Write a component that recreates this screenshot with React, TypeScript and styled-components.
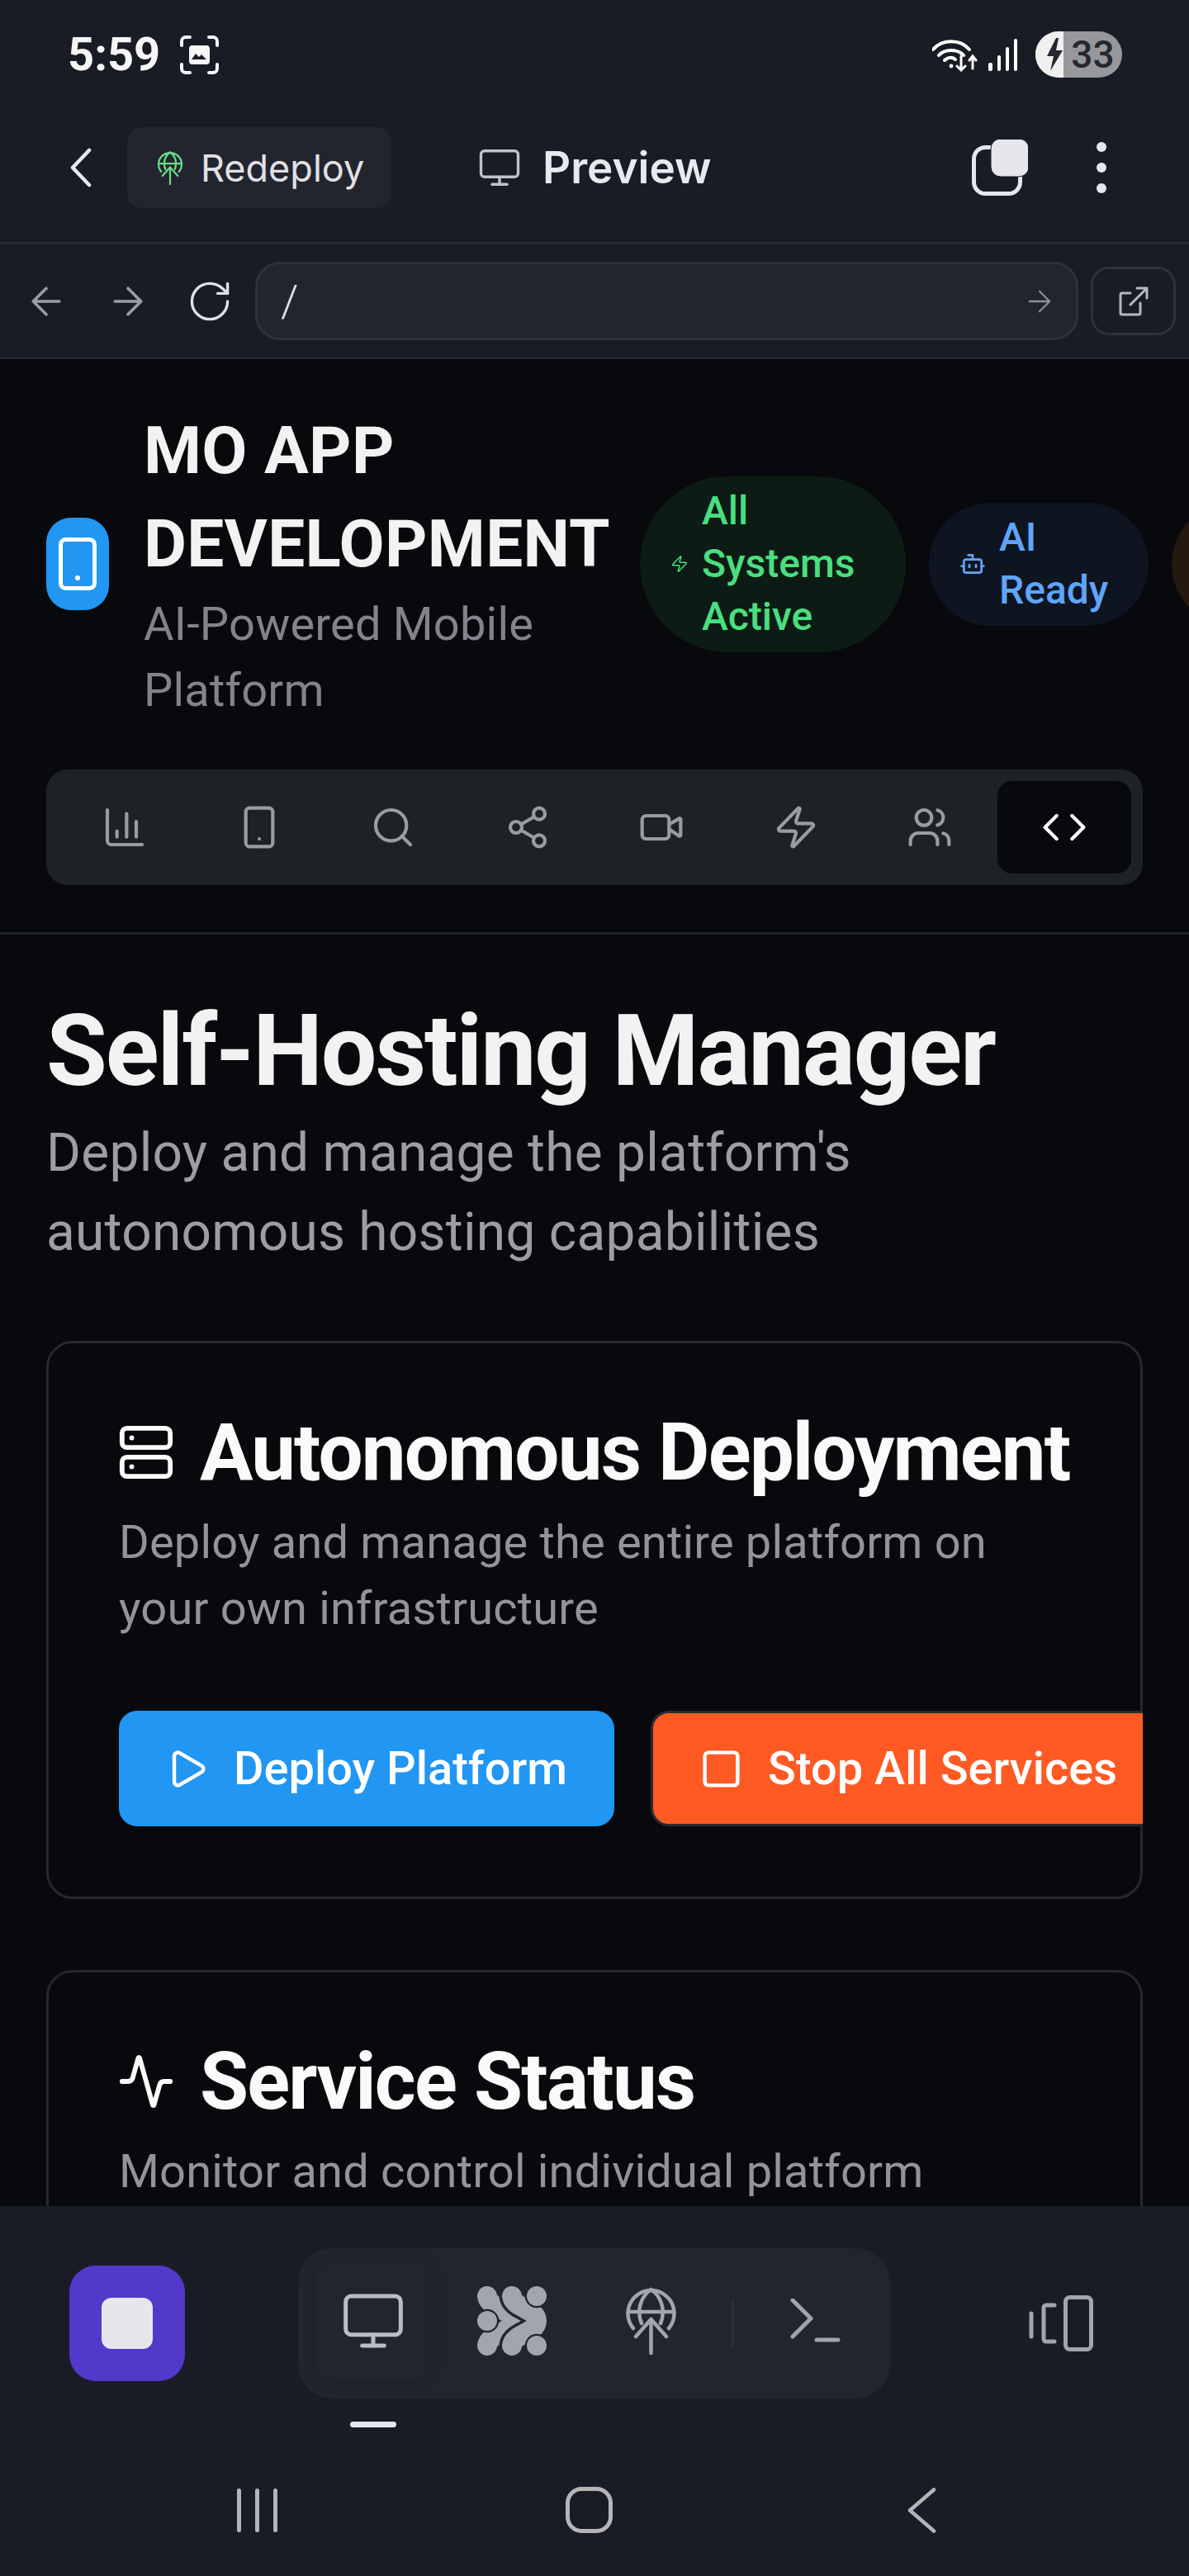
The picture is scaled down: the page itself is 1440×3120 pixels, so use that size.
import styled, { createGlobalStyle } from 'styled-components';
import { Bot, ChartColumn, Code, Monitor, Play, Search, Server, Share2, Smartphone, Square, Users, Video, Zap, Activity } from 'lucide-react';

const GlobalStyle = createGlobalStyle`
  html, body {
    margin: 0;
    padding: 0;
    background: #08090c;
  }
  * {
    box-sizing: border-box;
  }
`;

const Screen = styled.div`
  width: 1440px;
  height: 3120px;
  display: flex;
  flex-direction: column;
  overflow: hidden;
  background: #08090c;
  font-family: Roboto, 'Liberation Sans', sans-serif;
`;

const Chrome = styled.header`
  flex: none;
  background: #191c25;
  border-bottom: 2px solid #262933;
`;

const StatusBar = styled.div`
  height: 132px;
  display: flex;
  align-items: center;
  justify-content: space-between;
  padding: 0 81px 0 82px;
`;

const StatusGroup = styled.div`
  display: flex;
  align-items: center;
`;

const SignalBars = styled.svg`
  margin-left: 13px;
`;

const Clock = styled.span`
  font-size: 56px;
  font-weight: 700;
  color: #f6f6f7;
  margin-right: 24px;
`;

const Battery = styled.div`
  width: 105px;
  height: 56px;
  margin-left: 21px;
  border-radius: 28px;
  overflow: hidden;
  display: flex;
  background: #97989c;
`;

const BatteryCharge = styled.div`
  width: 34px;
  display: flex;
  align-items: center;
  justify-content: flex-end;
  background: #f0f0f1;
`;

const BatteryLevel = styled.span`
  flex: 1;
  text-align: center;
  font-size: 46px;
  line-height: 56px;
  font-weight: 500;
  color: #262730;
`;

const AppBar = styled.div`
  height: 164px;
  display: flex;
  align-items: flex-start;
  padding: 22px 100px 0 85px;
  border-bottom: 3px solid #262933;
`;

const BackChevron = styled.svg`
  width: 26px;
  height: 48px;
  margin: 25px 43px 0 0;
`;

const RedeployChip = styled.div`
  height: 98px;
  width: 320px;
  display: flex;
  align-items: center;
  gap: 21px;
  padding-left: 36px;
  border-radius: 18px;
  background: #22252e;
  color: #e0e1e7;
  font-family: Inter, Roboto, sans-serif;
  font-size: 45px;
  font-weight: 400;
`;

const PreviewTitle = styled.div`
  height: 98px;
  margin-left: 104px;
  display: flex;
  align-items: center;
  gap: 25px;
  color: #e8e9ee;
  font-family: Inter, Roboto, sans-serif;
  font-size: 53px;
  font-weight: 600;
`;

const AppBarActions = styled.div`
  margin-left: auto;
  height: 98px;
  display: flex;
  align-items: center;
  gap: 83px;
`;

const MenuDots = styled.svg`
  width: 12px;
  height: 62px;
`;

const Toolbar = styled.div`
  height: 137px;
  display: flex;
  align-items: center;
  padding: 0 16px 0 38px;
`;

const ToolIcon = styled.svg<{ $gap: number }>`
  flex: none;
  margin-right: ${(p) => p.$gap}px;
`;

const AddressBar = styled.div`
  flex: 1;
  height: 95px;
  display: flex;
  align-items: center;
  justify-content: space-between;
  padding: 0 30px 0 28px;
  border: 3px solid #2e313c;
  border-radius: 30px;
  background: #22252e;
  color: #e0e1e7;
  font-size: 54px;
  font-weight: 300;
`;

const OpenButton = styled.div`
  flex: none;
  width: 103px;
  height: 83px;
  margin-left: 15px;
  display: flex;
  align-items: center;
  justify-content: center;
  border: 3px solid #2e313c;
  border-radius: 22px;
`;

const Main = styled.main`
  flex: 1;
  min-height: 0;
  overflow: hidden;
`;

const PageHeader = styled.div`
  padding: 55px 0 57px;
  border-bottom: 3px solid #22252d;
`;

const BrandRow = styled.div`
  display: flex;
  align-items: center;
  padding-left: 56px;
  overflow: hidden;
`;

const Logo = styled.div`
  flex: none;
  width: 76px;
  height: 112px;
  display: flex;
  align-items: center;
  justify-content: center;
  border-radius: 30px;
  background: #2196f3;
  color: #fff;
`;

const BrandText = styled.div`
  flex: none;
  width: 564px;
  margin: 0 37px 0 42px;
`;

const BrandName = styled.h2`
  margin: 0;
  font-size: 80px;
  line-height: 113px;
  font-weight: 700;
  letter-spacing: 0.3px;
  color: #f2f2f2;
`;

const BrandTagline = styled.p`
  margin: 0;
  font-size: 56px;
  line-height: 80px;
  letter-spacing: 0.2px;
  color: #82838d;
`;

const Pill = styled.div<{ $bg: string; $fg: string }>`
  flex: none;
  display: flex;
  align-items: center;
  gap: 16px;
  margin-right: 28px;
  padding: 10px 0 11px 37px;
  border-radius: 999px;
  background: ${(p) => p.$bg};
  color: ${(p) => p.$fg};
  font-size: 48px;
  line-height: 64px;
  font-weight: 500;
`;

const PillText = styled.span<{ $width: number; $end: number }>`
  width: ${(p) => p.$width}px;
  margin-right: ${(p) => p.$end}px;
`;

const ClippedPill = styled.div`
  flex: none;
  width: 260px;
  height: 149px;
  border-radius: 999px;
  background: #24180f;
`;

const TabBar = styled.nav`
  margin: 56px 56px 0;
  padding: 14px;
  display: grid;
  grid-template-columns: repeat(8, 1fr);
  border-radius: 26px;
  background: #1e2126;
`;

const Tab = styled.div<{ $active?: boolean }>`
  height: 112px;
  display: flex;
  align-items: center;
  justify-content: center;
  border-radius: 18px;
  background: ${(p) => (p.$active ? '#08090c' : 'transparent')};
  color: ${(p) => (p.$active ? '#ffffff' : '#9a9ca3')};
`;

const Content = styled.div`
  padding: 75px 56px 0;
`;

const PageTitle = styled.h1`
  margin: 0;
  font-size: 120px;
  line-height: 132px;
  font-weight: 700;
  letter-spacing: -2.1px;
  color: #f2f2f2;
`;

const PageIntro = styled.p`
  margin: 10px 0 83px;
  font-size: 64px;
  line-height: 96px;
  letter-spacing: 0.25px;
  color: #9c9da5;
`;

const Card = styled.section`
  margin-bottom: 86px;
  padding: 79px 85px 85px;
  border: 3px solid #26282d;
  border-radius: 32px;
`;

const CardTitle = styled.h3`
  margin: 0;
  display: flex;
  align-items: center;
  gap: 30px;
  font-size: 96px;
  line-height: 106px;
  font-weight: 700;
  letter-spacing: -1.85px;
  color: #fafafa;
  svg {
    flex: none;
    margin-left: -2px;
  }
`;

const CardIntro = styled.p`
  margin: 16px 0 0;
  font-size: 56px;
  line-height: 80px;
  letter-spacing: 0.18px;
  color: #92939c;
`;

const ButtonRow = styled.div`
  margin: 84px -88px 0 0;
  display: flex;
  gap: 44px;
  overflow: hidden;
`;

const ActionButton = styled.button<{ $bg: string; $outlined?: boolean }>`
  flex: none;
  height: 140px;
  display: flex;
  align-items: center;
  gap: 30px;
  padding: 0 57px 0 56px;
  border: ${(p) => (p.$outlined ? '3px solid #2c2c30' : 'none')};
  border-radius: 22px;
  background: ${(p) => p.$bg};
  color: #fff;
  font-family: inherit;
  font-size: 56px;
  font-weight: 500;
`;

const BottomDock = styled.footer`
  flex: none;
  height: 448px;
  background: #191c25;
`;

const DockRow = styled.div`
  display: flex;
  align-items: center;
  padding: 51px 0 0 84px;
`;

const RunButton = styled.div`
  flex: none;
  width: 140px;
  height: 140px;
  margin-right: 137px;
  display: flex;
  align-items: center;
  justify-content: center;
  border-radius: 32px;
  background: #5239c9;
`;

const RunGlyph = styled.div`
  width: 62px;
  height: 62px;
  border-radius: 12px;
  background: #e6e7ed;
`;

const DockGroup = styled.div`
  flex: none;
  height: 182px;
  display: flex;
  align-items: flex-start;
  gap: 28px;
  padding: 15px 21px 0;
  margin-right: 168px;
  border-radius: 42px;
  background: #22252e;
`;

const DockSlot = styled.div<{ $active?: boolean }>`
  width: 140px;
  height: 146px;
  display: flex;
  align-items: center;
  justify-content: center;
  border-radius: 24px;
  color: ${(p) => (p.$active ? '#babdc6' : '#a0a5ae')};
  box-shadow: ${(p) => (p.$active ? '0 0 18px rgba(10, 12, 18, 0.12)' : 'none')};
`;

const DockDivider = styled.div`
  flex: none;
  width: 3px;
  height: 56px;
  margin-top: 48px;
  background: #2c2f3a;
`;

const DockIndicator = styled.div`
  width: 56px;
  height: 7px;
  margin: 28px 0 0 424px;
  border-radius: 4px;
  background: #e6e7ed;
`;

const SystemNav = styled.div`
  display: flex;
  align-items: center;
  padding: 72px 0 0 287px;
  color: #b5b5b8;
`;

const SystemIcon = styled.svg<{ $gap?: number }>`
  flex: none;
  margin-right: ${(p) => p.$gap ?? 0}px;
`;

const GlobeUpload = ({ width, height, color, weight }: { width: number; height: number; color: string; weight: number }) => (
  <svg width={width} height={height} viewBox="0 0 61 82" fill="none" stroke={color} strokeWidth={weight} strokeLinecap="round" strokeLinejoin="round">
    <path d="M9 50A28 28 0 1 1 52 50" />
    <path d="M3 30H58" />
    <path d="M30.5 3C17 12 13 30 19 44" />
    <path d="M30.5 3C44 12 48 30 42 44" />
    <path d="M30.5 80V40M12 60L30.5 39L49 60" />
  </svg>
);

const IntegrationsIcon = () => (
  <svg width="84" height="84" viewBox="0 0 84 84" fill="currentColor">
    <g fill="none" stroke="currentColor" strokeWidth="24" strokeLinecap="round">
      <path d="M12 12C14 27 42 27 42 42C42 57 14 57 12 72" />
    </g>
    <circle cx="12" cy="42" r="12" stroke="#22252e" strokeWidth="4.5" paintOrder="stroke" />
    <g fill="none" strokeLinecap="round">
      <path d="M42 12C44 27 72 27 72 42C72 57 44 57 42 72" stroke="#22252e" strokeWidth="31" />
      <path d="M42 12C44 27 72 27 72 42C72 57 44 57 42 72" stroke="currentColor" strokeWidth="24" />
    </g>
    <circle cx="72" cy="12" r="12" stroke="#22252e" strokeWidth="4.5" paintOrder="stroke" />
    <circle cx="72" cy="72" r="12" stroke="#22252e" strokeWidth="4.5" paintOrder="stroke" />
  </svg>
);

const App = () => (
  <Screen>
    <GlobalStyle />
    <Chrome>
      <StatusBar>
        <StatusGroup>
          <Clock>5:59</Clock>
          <svg width="47" height="47" viewBox="0 0 47 47" fill="none" stroke="#f6f6f7" strokeWidth="4" strokeLinecap="round">
            <path d="M2 12V7a5 5 0 0 1 5-5h5M35 2h5a5 5 0 0 1 5 5v5M45 35v5a5 5 0 0 1-5 5h-5M12 45H7a5 5 0 0 1-5-5v-5" />
            <rect x="11" y="12" width="25" height="23" rx="4" fill="#f6f6f7" stroke="none" />
            <path d="M14 29l5-7 4 4 3-3 6 6z" fill="#191c25" stroke="none" />
          </svg>
        </StatusGroup>
        <StatusGroup>
          <svg width="55" height="41" viewBox="0 0 55 41" fill="none" stroke="#fff" strokeWidth="4" strokeLinecap="round">
            <path d="M1 14C12 1 34 1 45 14" />
            <path d="M8 21C15 13 31 13 38 21" />
            <path d="M15 27C19 23 25 23 28 26" />
            <circle cx="23" cy="34" r="2.4" fill="#fff" stroke="none" />
            <path d="M35 22V39M30 34l5 5 5-5" strokeWidth="3" />
            <path d="M49 37V22M45 27l4-5 4 5" strokeWidth="3" />
          </svg>
          <SignalBars width="36" height="39" viewBox="0 0 36 39" fill="#fff">
            <rect x="0" y="29" width="5" height="10" rx="2" />
            <rect x="11" y="20" width="4" height="19" rx="2" />
            <rect x="21" y="10" width="4" height="29" rx="2" />
            <rect x="31" y="0" width="4" height="39" rx="2" />
          </SignalBars>
          <Battery>
            <BatteryCharge>
              <svg width="22" height="40" viewBox="0 0 22 40" fill="#262730">
                <path d="M13 0L2 22h8L6 40 21 15h-8l3-15z" />
              </svg>
            </BatteryCharge>
            <BatteryLevel>33</BatteryLevel>
          </Battery>
        </StatusGroup>
      </StatusBar>
      <AppBar>
        <BackChevron viewBox="0 0 26 48" fill="none" stroke="#e8e9ee" strokeWidth="4.5" strokeLinecap="round" strokeLinejoin="round">
          <path d="M23 3L3 24l20 21" />
        </BackChevron>
        <RedeployChip>
          <GlobeUpload width={32} height={41} color="#66dd86" weight={4.5} />
          Redeploy
        </RedeployChip>
        <PreviewTitle>
          <Monitor size={54} strokeWidth={1.5} color="#c1c3cb" />
          Preview
        </PreviewTitle>
        <AppBarActions>
          <svg width="68" height="68" viewBox="0 0 68 68" fill="none">
            <rect x="2.5" y="9.5" width="56" height="56" rx="14" stroke="#e6e7ed" strokeWidth="5" />
            <rect x="23" y="-1" width="46" height="46" rx="12" fill="#e6e7ed" stroke="#191c25" strokeWidth="1" />
          </svg>
          <MenuDots viewBox="0 0 12 62" fill="#e6e7ed">
            <circle cx="6" cy="6" r="6" />
            <circle cx="6" cy="31" r="6" />
            <circle cx="6" cy="56" r="6" />
          </MenuDots>
        </AppBarActions>
      </AppBar>
      <Toolbar>
        <ToolIcon $gap={63} width="36" height="36" viewBox="4 4 16 16" fill="none" stroke="#9a9da6" strokeWidth="1.6" strokeLinecap="round" strokeLinejoin="round">
          <path d="M12 5l-7 7 7 7M5 12h14" />
        </ToolIcon>
        <ToolIcon $gap={57} width="36" height="36" viewBox="4 4 16 16" fill="none" stroke="#9a9da6" strokeWidth="1.6" strokeLinecap="round" strokeLinejoin="round">
          <path d="M12 5l7 7-7 7M19 12H5" />
        </ToolIcon>
        <ToolIcon $gap={31} width="48" height="48" viewBox="2 2 20 20" fill="none" stroke="#e0e1e6" strokeWidth="1.4" strokeLinecap="round" strokeLinejoin="round">
          <path d="M21 12a9 9 0 1 1-9-9c2.52 0 4.93 1 6.74 2.74L21 8" />
          <path d="M21 3v5h-5" />
        </ToolIcon>
        <AddressBar>
          /
          <svg width="28" height="28" viewBox="4 4 16 16" fill="none" stroke="#8b8e97" strokeWidth="1.3" strokeLinecap="round" strokeLinejoin="round">
            <path d="M12 5l7 7-7 7M19 12H5" />
          </svg>
        </AddressBar>
        <OpenButton>
          <svg width="36" height="36" viewBox="0 0 36 36" fill="none" stroke="#b6b8c0" strokeWidth="3" strokeLinecap="round" strokeLinejoin="round">
            <path d="M14 8H4a2 2 0 0 0-2 2v22a2 2 0 0 0 2 2h20a2 2 0 0 0 2-2V20" />
            <path d="M14 22L34 2M22 2h12v12" />
          </svg>
        </OpenButton>
      </Toolbar>
    </Chrome>

    <Main>
      <PageHeader>
        <BrandRow>
          <Logo>
            <svg width="46" height="64" viewBox="0 0 46 64" fill="none" stroke="#fff" strokeWidth="5">
              <rect x="2.5" y="2.5" width="41" height="59" rx="6" />
              <circle cx="23" cy="49" r="3" fill="#fff" stroke="none" />
            </svg>
          </Logo>
          <BrandText>
            <BrandName>MO APP DEVELOPMENT</BrandName>
            <BrandTagline>AI-Powered Mobile Platform</BrandTagline>
          </BrandText>
          <Pill $bg="#0c1c14" $fg="#4ade80">
            <Zap size={22} strokeWidth={1.6} />
            <PillText $width={185} $end={62}>All Systems Active</PillText>
          </Pill>
          <Pill $bg="#0e1521" $fg="#60a5fa">
            <Bot size={32} strokeWidth={2} />
            <PillText $width={133} $end={48}>AI Ready</PillText>
          </Pill>
          <ClippedPill />
        </BrandRow>
        <TabBar>
          <Tab><ChartColumn size={56} strokeWidth={1.8} /></Tab>
          <Tab><Smartphone size={56} strokeWidth={1.8} /></Tab>
          <Tab><Search size={56} strokeWidth={1.8} /></Tab>
          <Tab><Share2 size={56} strokeWidth={1.8} /></Tab>
          <Tab><Video size={56} strokeWidth={1.8} /></Tab>
          <Tab><Zap size={56} strokeWidth={1.8} /></Tab>
          <Tab><Users size={56} strokeWidth={1.8} /></Tab>
          <Tab $active><Code size={56} strokeWidth={1.8} /></Tab>
        </TabBar>
      </PageHeader>

      <Content>
        <PageTitle>Self-Hosting Manager</PageTitle>
        <PageIntro>Deploy and manage the platform's autonomous hosting capabilities</PageIntro>

        <Card>
          <CardTitle>
            <Server size={70} strokeWidth={2} />
            Autonomous Deployment
          </CardTitle>
          <CardIntro>Deploy and manage the entire platform on your own infrastructure</CardIntro>
          <ButtonRow>
            <ActionButton $bg="#2196f3">
              <Play size={53} strokeWidth={2} />
              Deploy Platform
            </ActionButton>
            <ActionButton $bg="#ff5a24" $outlined>
              <Square size={53} strokeWidth={2} />
              Stop All Services
            </ActionButton>
          </ButtonRow>
        </Card>

        <Card>
          <CardTitle>
            <Activity size={70} strokeWidth={2} />
            Service Status
          </CardTitle>
          <CardIntro>Monitor and control individual platform</CardIntro>
        </Card>
      </Content>
    </Main>

    <BottomDock>
      <DockRow>
        <RunButton>
          <RunGlyph />
        </RunButton>
        <DockGroup>
          <DockSlot $active>
            <Monitor size={80} strokeWidth={1.5} />
          </DockSlot>
          <DockSlot>
            <IntegrationsIcon />
          </DockSlot>
          <DockSlot>
            <GlobeUpload width={61} height={82} color="#a0a5ae" weight={4.5} />
          </DockSlot>
          <DockDivider />
          <DockSlot>
            <svg width="61" height="54" viewBox="0 0 61 54" fill="none" stroke="currentColor" strokeWidth="5" strokeLinecap="round" strokeLinejoin="round">
              <path d="M3 2L25 24 3 46" />
              <path d="M32 50H58" />
            </svg>
          </DockSlot>
        </DockGroup>
        <svg width="78" height="68" viewBox="0 0 78 68" fill="none" stroke="#a0a5ae" strokeWidth="5" strokeLinecap="round" strokeLinejoin="round">
          <path d="M3 22V50" />
          <path d="M31 12H21a3 3 0 0 0-3 3v38a3 3 0 0 0 3 3h10" />
          <rect x="44.5" y="2.5" width="31" height="63" rx="5" />
        </svg>
      </DockRow>
      <DockIndicator />
      <SystemNav>
        <SystemIcon $gap={349} width="49" height="53" viewBox="0 0 49 53" fill="currentColor">
          <rect x="0" y="0" width="5" height="53" rx="2.5" />
          <rect x="22" y="0" width="5" height="53" rx="2.5" />
          <rect x="44" y="0" width="5" height="53" rx="2.5" />
        </SystemIcon>
        <SystemIcon $gap={357} width="57" height="56" viewBox="0 0 57 56" fill="none" stroke="currentColor" strokeWidth="5">
          <rect x="2.5" y="2.5" width="52" height="51" rx="17" />
        </SystemIcon>
        <SystemIcon width="35" height="55" viewBox="0 0 35 55" fill="none" stroke="currentColor" strokeWidth="4.5" strokeLinecap="round" strokeLinejoin="round">
          <path d="M32 2.5L3 27.5l29 25" />
        </SystemIcon>
      </SystemNav>
    </BottomDock>
  </Screen>
);

export default App;
